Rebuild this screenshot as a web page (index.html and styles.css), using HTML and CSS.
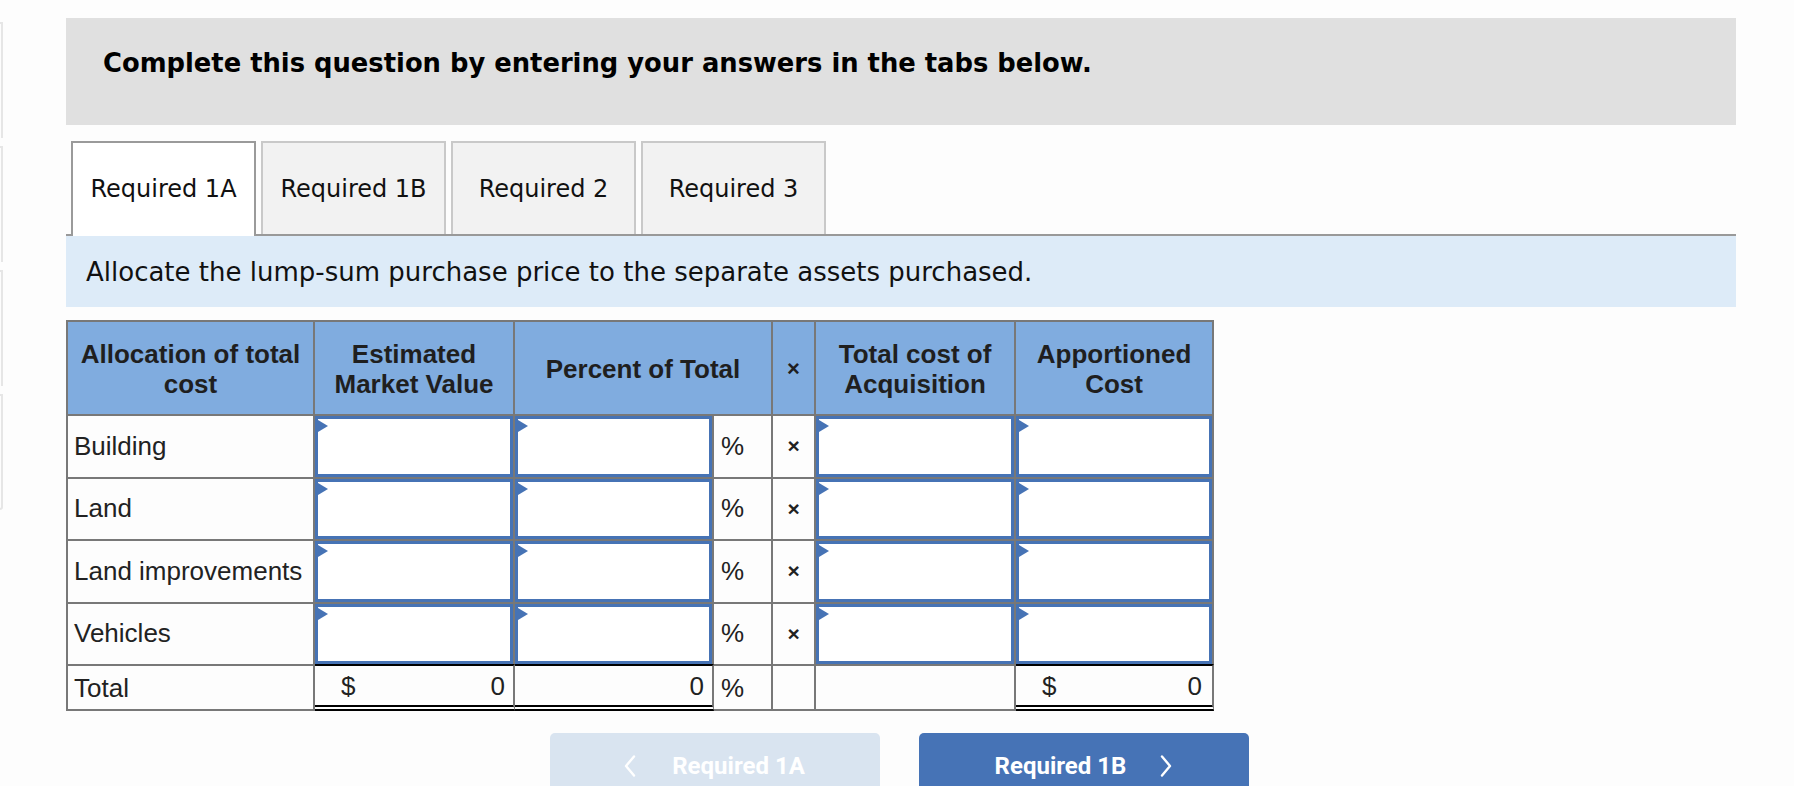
FILE: index.html
```html
<!DOCTYPE html>
<html lang="en">
<head>
<meta charset="utf-8">
<title>Required 1A</title>
<link rel="stylesheet" href="styles.css">
</head>
<body>
<div class="page">
  <aside class="rail">
    <div class="rail-card"></div>
    <div class="rail-card"></div>
    <div class="rail-card"></div>
    <div class="rail-card rail-card-last"></div>
  </aside>
  <main class="main">
    <div class="prompt">Complete this question by entering your answers in the tabs below.</div>

    <div class="tabs">
      <div class="tab tab-active">Required 1A</div>
      <div class="tab">Required 1B</div>
      <div class="tab">Required 2</div>
      <div class="tab">Required 3</div>
    </div>

    <div class="instruction">Allocate the lump-sum purchase price to the separate assets purchased.</div>

    <table class="alloc">
      <colgroup>
        <col class="c-label">
        <col class="c-money">
        <col class="c-pct">
        <col class="c-pctsign">
        <col class="c-times">
        <col class="c-money">
        <col class="c-last">
      </colgroup>
      <thead>
        <tr>
          <th>Allocation of total<br>cost</th>
          <th>Estimated<br>Market Value</th>
          <th colspan="2">Percent of Total</th>
          <th class="times-head">×</th>
          <th>Total cost of<br>Acquisition</th>
          <th>Apportioned<br>Cost</th>
        </tr>
      </thead>
      <tbody>
        <tr>
          <td class="label">Building</td>
          <td class="in"><div class="field"></div></td>
          <td class="in"><div class="field"></div></td>
          <td class="sign">%</td>
          <td class="times">×</td>
          <td class="in"><div class="field"></div></td>
          <td class="in"><div class="field"></div></td>
        </tr>
        <tr>
          <td class="label">Land</td>
          <td class="in"><div class="field"></div></td>
          <td class="in"><div class="field"></div></td>
          <td class="sign">%</td>
          <td class="times">×</td>
          <td class="in"><div class="field"></div></td>
          <td class="in"><div class="field"></div></td>
        </tr>
        <tr>
          <td class="label">Land improvements</td>
          <td class="in"><div class="field"></div></td>
          <td class="in"><div class="field"></div></td>
          <td class="sign">%</td>
          <td class="times">×</td>
          <td class="in"><div class="field"></div></td>
          <td class="in"><div class="field"></div></td>
        </tr>
        <tr class="row-last">
          <td class="label">Vehicles</td>
          <td class="in"><div class="field"></div></td>
          <td class="in"><div class="field"></div></td>
          <td class="sign">%</td>
          <td class="times">×</td>
          <td class="in"><div class="field"></div></td>
          <td class="in"><div class="field"></div></td>
        </tr>
        <tr class="total">
          <td class="label">Total</td>
          <td class="sum"><div class="amount"><span>$</span><span>0</span></div></td>
          <td class="sum"><div class="amount amount-right"><span>0</span></div></td>
          <td class="sign">%</td>
          <td class="times"></td>
          <td></td>
          <td class="sum"><div class="amount amount-ap"><span>$</span><span>0</span></div></td>
        </tr>
      </tbody>
    </table>

    <div class="nav">
      <div class="nav-btn nav-prev">
        <svg class="chev" width="12" height="22" viewBox="0 0 12 22"><polyline points="10,1.5 2,11 10,20.5" /></svg>
        <span>Required 1A</span>
      </div>
      <div class="nav-btn nav-next">
        <span>Required 1B</span>
        <svg class="chev" width="12" height="22" viewBox="0 0 12 22"><polyline points="2,1.5 10,11 2,20.5" /></svg>
      </div>
    </div>
  </main>
</div>
</body>
</html>
```
FILE: styles.css
```css
html, body {
  margin: 0;
  padding: 0;
  background: #fdfdfd;
}

.page {
  display: flex;
  align-items: flex-start;
  width: 1794px;
  height: 786px;
  overflow: hidden;
}

/* cut-off side rail on the far left */
.rail {
  width: 5px;
  flex: 0 0 5px;
  margin-top: 22px;
  display: flex;
  flex-direction: column;
  gap: 8px;
}
.rail-card {
  width: 3px;
  height: 116px;
  border-top: 2px solid #e6e6e6;
  border-right: 2px solid #e6e6e6;
  box-sizing: border-box;
}
.rail-card-last {
  border-bottom: 2px solid #e6e6e6;
  border-bottom-right-radius: 3px;
}

.main {
  margin-left: 61px;
  width: 1670px;
  padding-top: 18px;
}

.prompt {
  background: #e0e0e0;
  height: 107px;
  box-sizing: border-box;
  padding: 31px 37px 0;
  font-family: "DejaVu Sans", Verdana, sans-serif;
  font-weight: bold;
  font-size: 25.8px;
  line-height: 29px;
  color: #000;
}

.tabs {
  margin-top: 16px;
  display: flex;
  align-items: flex-start;
  gap: 5px;
  padding-left: 5px;
  border-bottom: 2px solid #999;
}
.tab {
  width: 185px;
  height: 93px;
  box-sizing: border-box;
  border: 2px solid #c9c9c9;
  border-bottom: none;
  background: #f2f2f2;
  display: flex;
  align-items: center;
  justify-content: center;
  padding-top: 1px;
  font-family: "DejaVu Sans", Verdana, sans-serif;
  font-size: 24px;
  color: #111;
}
.tab-active {
  background: #fff;
  border-color: #9a9a9a;
  height: 95px;
  margin-bottom: -2px;
  padding-bottom: 2px;
}

.instruction {
  background: #ddebf8;
  height: 71px;
  box-sizing: border-box;
  padding-left: 20px;
  display: flex;
  align-items: center;
  font-family: "DejaVu Sans", Verdana, sans-serif;
  font-size: 26px;
  color: #111;
}

/* allocation table */
.alloc {
  margin-top: 13px;
  width: 1148px;
  table-layout: fixed;
  border-collapse: separate;
  border-spacing: 0;
  border-top: 2px solid #787878;
  border-left: 2px solid #787878;
  font-family: "Liberation Sans", Arial, sans-serif;
  font-size: 26px;
  color: #222;
}
.c-label { width: 247px; }
.c-money { width: 200px; }
.c-pct { width: 199px; }
.c-pctsign { width: 59px; }
.c-times { width: 43px; }
.c-last { width: 198px; }

.alloc th,
.alloc td {
  border-right: 2px solid #787878;
  border-bottom: 2px solid #787878;
  padding: 0;
  box-sizing: border-box;
}
.alloc th {
  background: #80acdf;
  height: 94px;
  font-weight: bold;
  line-height: 30px;
  text-align: center;
  vertical-align: middle;
  color: #1f1f1f;
  padding-top: 2px;
}
.alloc th.times-head {
  font-size: 22px;
}
.alloc td {
  height: 62.5px;
  vertical-align: middle;
}
.alloc td.label {
  padding-left: 6px;
  white-space: nowrap;
}
.alloc td.sign {
  padding-left: 7px;
}
.alloc td.times {
  text-align: center;
  font-weight: bold;
  font-size: 21px;
}

.field {
  position: relative;
  height: 60.5px;
  box-sizing: border-box;
  border: 3px solid #4673b5;
  background: #fff;
}
.field::before {
  content: "";
  position: absolute;
  left: 0;
  top: 1px;
  border-left: 10px solid #4673b5;
  border-top: 6.5px solid transparent;
  border-bottom: 6.5px solid transparent;
}

.row-last td {
  border-bottom: none;
  height: 60.5px;
}
.total td {
  height: 47px;
  border-top: 2px solid #787878;
  padding-top: 2px;
}
.total td.sum {
  border-top-color: #000;
  border-bottom: 6px double #000;
}
.amount {
  display: flex;
  justify-content: space-between;
  padding: 0 8px 0 26px;
}
.amount-right {
  justify-content: flex-end;
}
.amount-ap {
  padding-right: 10px;
}

/* navigation buttons */
.nav {
  margin-top: 22px;
  padding-right: 4px;
  display: flex;
  justify-content: center;
  gap: 39px;
}
.nav-btn {
  width: 330px;
  height: 66px;
  box-sizing: border-box;
  border-radius: 5px 5px 0 0;
  display: flex;
  align-items: center;
  justify-content: center;
  font-family: Roboto, "Liberation Sans", sans-serif;
  font-weight: bold;
  font-size: 24px;
  color: #fff;
}
.nav-prev {
  background: #d9e4f0;
  gap: 36px;
}
.nav-next {
  background: #4673b6;
  gap: 34px;
}
.chev polyline {
  fill: none;
  stroke: #fff;
  stroke-width: 2.4;
  stroke-linecap: round;
  stroke-linejoin: round;
}
```
